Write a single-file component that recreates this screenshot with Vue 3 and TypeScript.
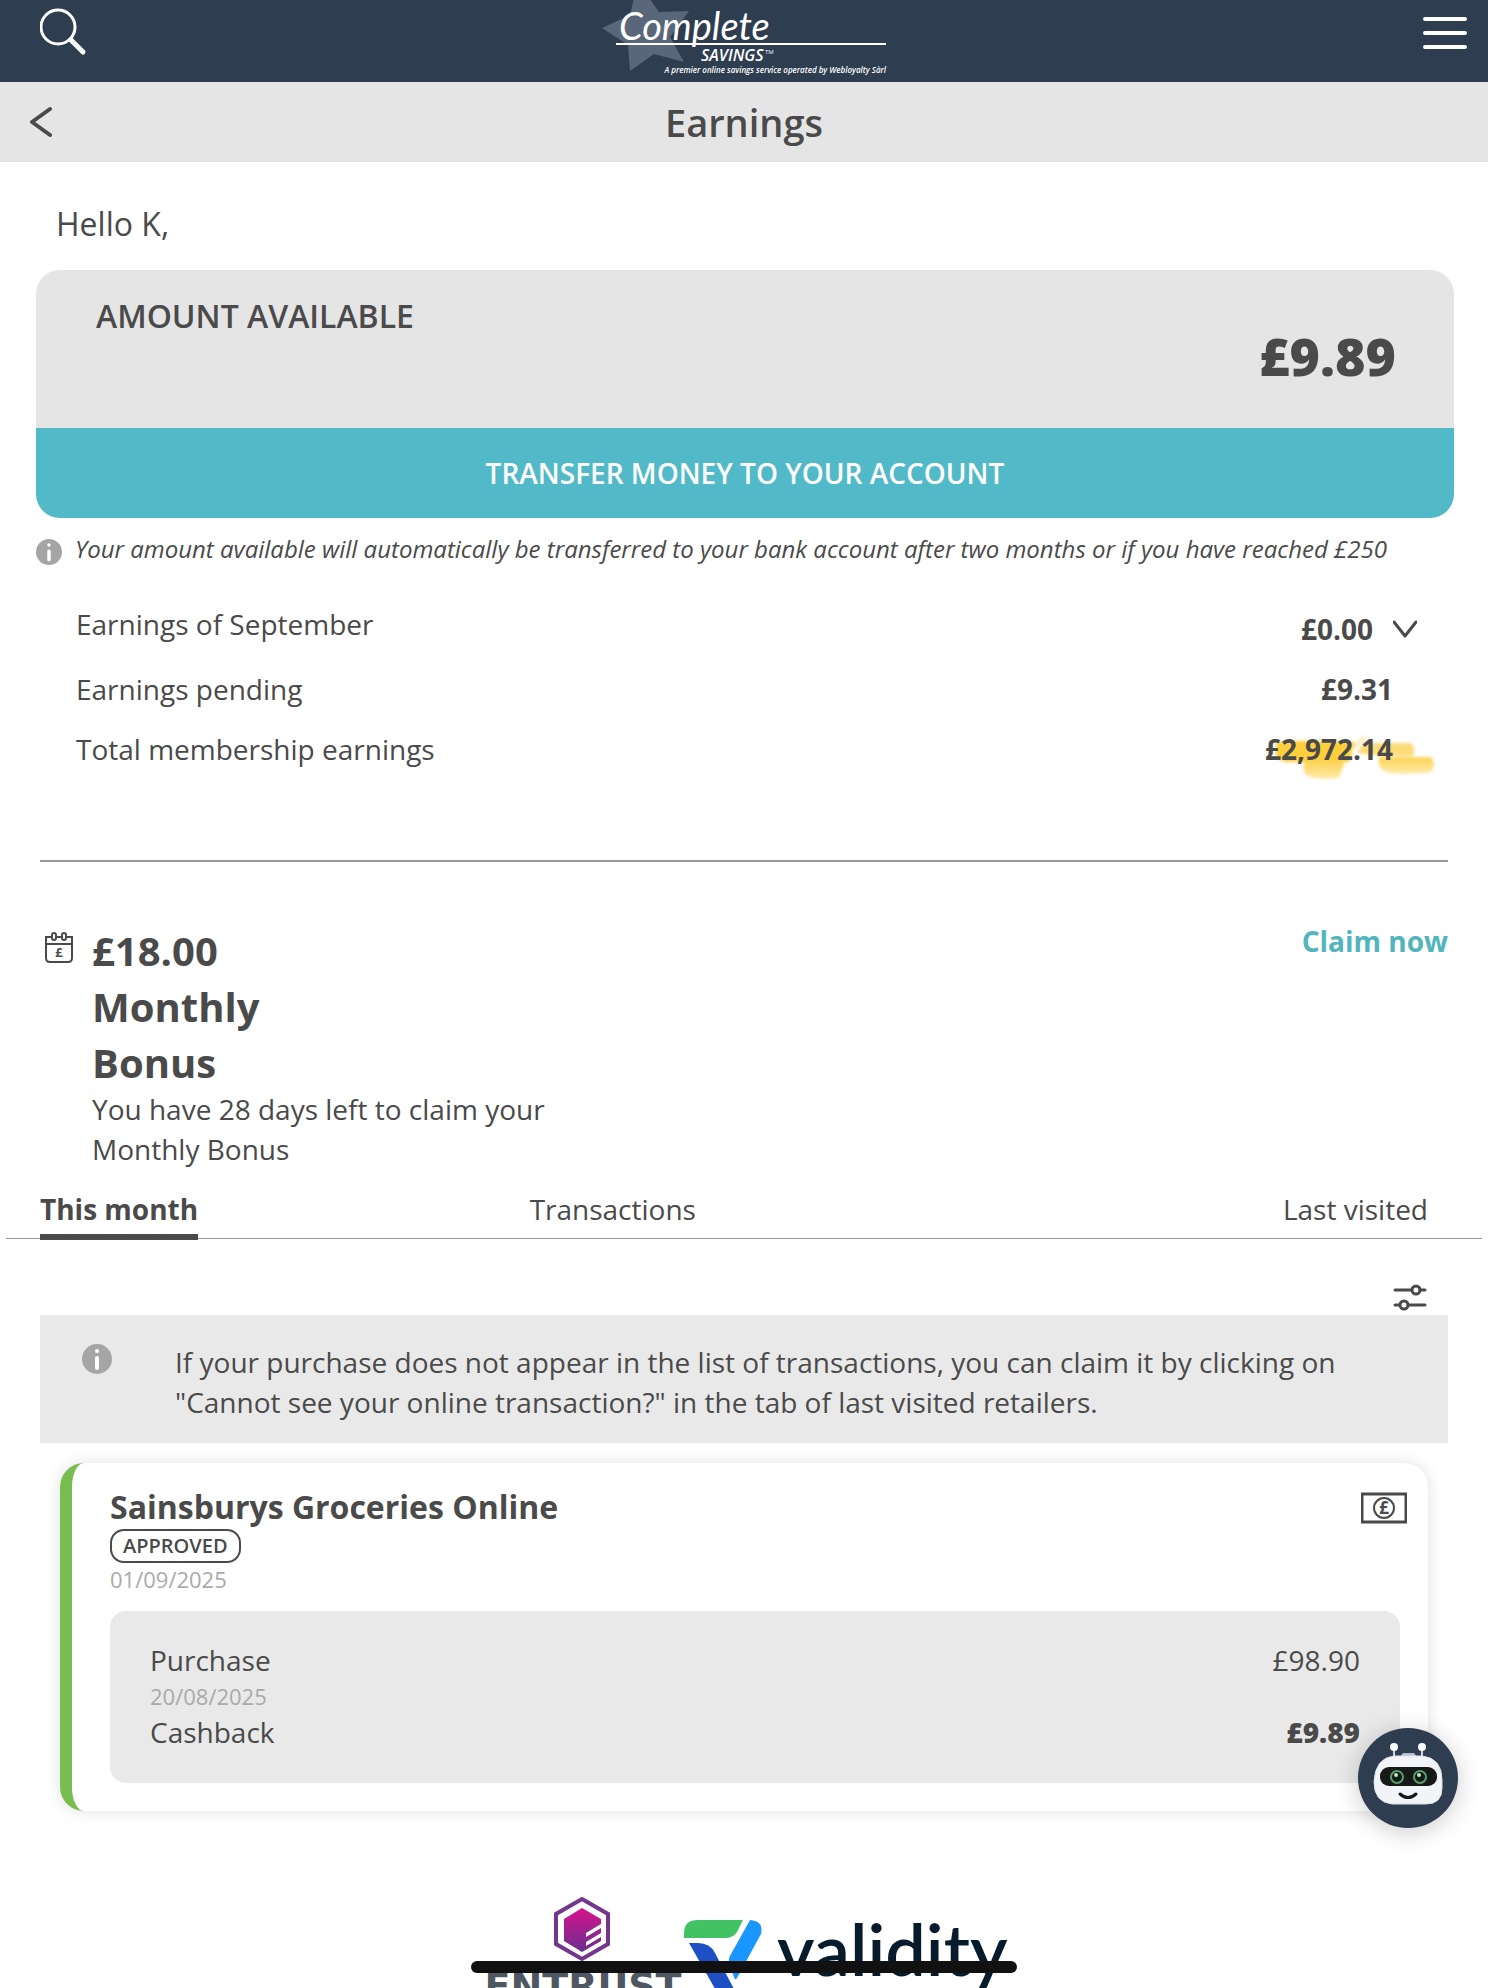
<script setup lang="ts">
interface Earning {
  label: string
  value: string
  expandable?: boolean
  marked?: boolean
}

const earnings: Earning[] = [
  { label: 'Earnings of September', value: '£0.00', expandable: true },
  { label: 'Earnings pending', value: '£9.31' },
  { label: 'Total membership earnings', value: '£2,972.14', marked: true },
]

const tabs: string[] = ['This month', 'Transactions', 'Last visited']
</script>

<template>
  <div class="page">
    <header class="topbar">
      <button class="icon-btn" aria-label="Search">
        <svg width="48" height="48" viewBox="0 0 48 48" fill="none" stroke="#fff" stroke-linecap="round">
          <circle cx="18" cy="19" r="17" stroke-width="3" />
          <path d="M31 32L43 44" stroke-width="5" />
        </svg>
      </button>
      <svg class="logo" width="288" height="82" viewBox="0 0 288 82" role="img" aria-label="Complete Savings">
        <path fill="#5a6679" d="M2 28L30 15L38 -18L59 12L89 11L70 37L84 62L54 54L30 71L28 45Z" />
        <text class="logo-script" x="19" y="40">Complete</text>
        <path d="M16 44H286" stroke="#fff" stroke-width="2" />
        <text class="logo-sub" x="101" y="61">SAVINGS</text>
        <text class="logo-tm" x="165" y="54">TM</text>
        <text class="logo-tag" x="286" y="73" text-anchor="end">A premier online savings service operated by Webloyalty Sàrl</text>
      </svg>
      <button class="icon-btn" aria-label="Menu">
        <svg width="44" height="34" viewBox="0 0 44 34" stroke="#fff" stroke-width="4" stroke-linecap="round">
          <path d="M2 3H42M2 17H42M2 31H42" />
        </svg>
      </button>
    </header>

    <div class="titlebar">
      <button class="icon-btn back" aria-label="Back">
        <svg width="24" height="32" viewBox="0 0 24 32" fill="none" stroke="#4a4a4a" stroke-width="4" stroke-linecap="round" stroke-linejoin="round">
          <path d="M20 3L2 16L20 29" />
        </svg>
      </button>
      <h1>Earnings</h1>
    </div>

    <main>
      <p class="hello">Hello K,</p>

      <section class="available">
        <div class="available-panel">
          <h2>AMOUNT AVAILABLE</h2>
          <strong>£9.89</strong>
        </div>
        <button class="transfer">TRANSFER MONEY TO YOUR ACCOUNT</button>
      </section>

      <p class="note">
        <svg width="26" height="26" viewBox="0 0 30 30">
          <circle cx="15" cy="15" r="15" fill="#a5a5a5" />
          <circle cx="15" cy="7" r="2" fill="#fff" />
          <path d="M15 14V24" stroke="#fff" stroke-width="4" stroke-linecap="round" />
        </svg>
        <em>Your amount available will automatically be transferred to your bank account after two months or if you have reached £250</em>
      </p>

      <dl class="earnings">
        <div v-for="row in earnings" :key="row.label" class="row" :class="{ expandable: row.expandable }">
          <dt>{{ row.label }}</dt>
          <dd>
            <svg v-if="row.marked" class="marker" width="176" height="52" viewBox="0 0 176 52">
              <defs>
                <linearGradient id="fade" x1="0" y1="0" x2="0" y2="1">
                  <stop offset="0" stop-color="#fdd353" />
                  <stop offset="1" stop-color="#fee9a8" />
                </linearGradient>
                <filter id="soft" x="-10%" y="-20%" width="120%" height="140%"><feGaussianBlur stdDeviation="1.5" /></filter>
              </defs>
              <g filter="url(#soft)">
                <path fill="#fdcf3e" d="M6 8Q12 6 84 8L78 28H16Q5 27 4 17Z" />
                <path fill="url(#fade)" d="M34 27H74L68 44Q48 46 36 42Q30 36 34 27Z" />
                <path fill="#fddc7a" d="M92 9H140Q145 14 142 22H110L86 19Z" />
                <path fill="url(#fade)" d="M108 23H160Q166 30 160 38Q138 41 118 39Q106 36 108 23Z" />
                <path d="M82 14L94 2" stroke="#fdeab0" stroke-width="3" />
              </g>
            </svg>
            <span>{{ row.value }}</span>
            <button v-if="row.expandable" class="icon-btn" aria-label="Show details">
              <svg width="24" height="18" viewBox="0 0 24 18" fill="none" stroke="#4a4a4a" stroke-width="3" stroke-linecap="round" stroke-linejoin="round">
                <path d="M1 2L12 16L23 2" />
              </svg>
            </button>
          </dd>
        </div>
      </dl>

      <hr class="divider" />

      <section class="bonus">
        <svg width="28" height="32" viewBox="0 0 28 32" fill="none" stroke="#4a4a4a" stroke-width="2">
          <path d="M1 5H27V26Q27 30 23 30H5Q1 30 1 26Z" />
          <path d="M1 12H27" />
          <rect x="7" y="1" width="4" height="7" rx="2" fill="#fff" />
          <rect x="17" y="1" width="4" height="7" rx="2" fill="#fff" />
          <text class="coin" x="14" y="25" font-size="13" text-anchor="middle">£</text>
        </svg>
        <div class="bonus-body">
          <h2>£18.00 Monthly Bonus</h2>
          <p>You have 28 days left to claim your Monthly Bonus</p>
        </div>
        <a href="#claim">Claim now</a>
      </section>

      <nav class="tabs">
        <button v-for="(tab, i) in tabs" :key="tab" :class="{ active: i === 0 }">{{ tab }}</button>
      </nav>

      <div class="filter">
        <button class="icon-btn" aria-label="Filter">
          <svg width="34" height="28" viewBox="0 0 34 28" fill="none" stroke="#4a4a4a" stroke-width="3" stroke-linecap="round">
            <path d="M2 7H18M27 7H32M2 22H6M15 22H32" />
            <circle cx="23" cy="7" r="4" />
            <circle cx="11" cy="22" r="4" />
          </svg>
        </button>
      </div>

      <aside class="info">
        <svg width="30" height="30" viewBox="0 0 30 30">
          <circle cx="15" cy="15" r="15" fill="#a5a5a5" />
          <circle cx="15" cy="7" r="2" fill="#fff" />
          <path d="M15 14V24" stroke="#fff" stroke-width="4" stroke-linecap="round" />
        </svg>
        <p>If your purchase does not appear in the list of transactions, you can claim it by clicking on "Cannot see your online transaction?" in the tab of last visited retailers.</p>
      </aside>

      <article class="card">
        <div class="card-head">
          <h3>Sainsburys Groceries Online</h3>
          <svg width="46" height="32" viewBox="0 0 46 32" fill="none" stroke="#4a4a4a">
            <rect x="1" y="2" width="44" height="28" stroke-width="3" />
            <circle cx="23" cy="16" r="10" stroke-width="2" />
            <text class="coin" x="23" y="22" font-size="17" text-anchor="middle">£</text>
          </svg>
        </div>
        <span class="badge">APPROVED</span>
        <p class="date">01/09/2025</p>
        <dl class="detail">
          <div><dt>Purchase</dt><dd>£98.90</dd></div>
          <div class="date">20/08/2025</div>
          <div><dt>Cashback</dt><dd class="total">£9.89</dd></div>
        </dl>
      </article>
    </main>

    <footer>
      <svg width="200" height="110" viewBox="0 0 200 110" role="img" aria-label="Entrust">
        <defs>
          <linearGradient id="gem" x1="0" y1="0" x2="0" y2="1">
            <stop offset="0" stop-color="#d6128a" />
            <stop offset="1" stop-color="#6a2f90" />
          </linearGradient>
        </defs>
        <path d="M98 2L124 17V47L98 62L72 47V17Z" fill="#fff" stroke="#74358c" stroke-width="4" />
        <path d="M98 11L117 22V27L102 36V40L117 31V36L102 45V49L117 40V44L98 55L80 44V22Z" fill="url(#gem)" />
        <text class="entrust" x="99" y="102" text-anchor="middle">ENTRUST</text>
      </svg>
      <svg class="validity-logo" width="320" height="110" viewBox="0 0 320 110" role="img" aria-label="Validity">
        <path fill="#43c263" d="M14 23H59L53 35Q49 41 41 41H0V36Q0 23 14 23Z" />
        <path fill="#1a96ff" d="M66 23Q80 24 77 37L53 81Q51 84 50 80L45 67Q44 62 47 57Z" />
        <path fill="#1f4fc4" d="M5 46H14Q26 46 31 56L50 92L46 104H38Z" />
        <text class="validity" x="93" y="79">validity</text>
      </svg>
    </footer>

    <button class="bot" aria-label="Open chat assistant">
      <svg width="100" height="100" viewBox="0 0 100 100">
        <path d="M36 18V32M64 18V32" stroke="#cdd3df" stroke-width="2" />
        <circle cx="36" cy="19" r="4" fill="#fff" />
        <circle cx="64" cy="19" r="4" fill="#fff" />
        <path d="M42 29L45 25H56L59 29Z" fill="#b7c0d2" />
        <path d="M36 28H64Q84 30 84 52V60Q84 76 68 76H34Q16 74 16 54Q17 30 36 28Z" fill="#f3f4f8" stroke="#dfe3ec" />
        <rect x="22" y="39" width="57" height="19" rx="9" fill="#161918" />
        <circle cx="39" cy="49" r="6" fill="#0c1d14" stroke="#5b9c6c" stroke-width="2" />
        <circle cx="62" cy="49" r="6" fill="#0c1d14" stroke="#5b9c6c" stroke-width="2" />
        <circle cx="38" cy="47" r="2" fill="#c4e5cc" />
        <circle cx="61" cy="47" r="2" fill="#c4e5cc" />
        <path d="M42 66Q50 73 58 66" fill="none" stroke="#16181c" stroke-width="3" stroke-linecap="round" />
      </svg>
    </button>
    <div class="home-bar"></div>
  </div>
</template>

<style>
body {
  margin: 0;
  background: #fff;
}
</style>

<style scoped>
.page {
  position: relative;
  display: flex;
  flex-direction: column;
  height: 100vh;
  overflow: hidden;
  font-family: 'Open Sans', 'Noto Sans', sans-serif;
  font-size: 28px;
  line-height: 40px;
  color: #4a4a4a;
  background: #fff;
}
h1, h2, h3, p, dl, dd {
  margin: 0;
}
svg {
  display: block;
  flex: none;
}
button {
  padding: 0;
  border: 0;
  background: none;
  font: inherit;
  color: inherit;
  cursor: pointer;
}
.topbar {
  display: flex;
  flex: none;
  align-items: flex-start;
  justify-content: space-between;
  height: 82px;
  padding: 0 21px 0 40px;
  background: #2e3d50;
}
.topbar .icon-btn {
  margin-top: 8px;
}
.topbar .icon-btn:last-child {
  margin-top: 16px;
}
.logo {
  margin-left: -24px;
}
.logo text {
  fill: #fff;
  font-style: italic;
}
.logo-script {
  font-family: Lato, sans-serif;
  font-size: 38px;
}
.logo-sub {
  font-size: 16px;
  font-weight: 600;
}
.logo .logo-tm {
  font-size: 6px;
  font-style: normal;
}
.logo-tag {
  font-size: 8px;
  font-weight: 600;
}
.titlebar {
  display: grid;
  flex: none;
  grid-template-columns: 1fr auto 1fr;
  align-items: center;
  height: 80px;
  padding: 0 30px;
  background: #e5e5e5;
}
h1 {
  font-size: 38px;
  font-weight: 600;
}
.back {
  justify-self: start;
}
main {
  flex: none;
  padding: 40px 40px 0;
}
.hello {
  padding-left: 16px;
  font-size: 32px;
  line-height: 44px;
}
.available {
  margin: 24px -6px 0 -4px;
  overflow: hidden;
  border-radius: 24px;
}
.available-panel {
  display: flex;
  justify-content: space-between;
  height: 124px;
  padding: 24px 58px 10px 60px;
  background: #e5e5e5;
}
.available h2 {
  font-size: 32px;
  font-weight: 600;
  line-height: 44px;
}
.available strong {
  align-self: center;
  font-size: 52px;
  font-weight: 800;
  line-height: 72px;
}
.transfer {
  display: block;
  width: 100%;
  height: 90px;
  background: #52b9c8;
  color: #fff;
  font-weight: 600;
}
.note {
  display: flex;
  align-items: flex-end;
  gap: 13px;
  margin: 13px 0 0 -4px;
  font-size: 24px;
  line-height: 36px;
  white-space: nowrap;
}
.note svg {
  margin-bottom: 2px;
}
.earnings {
  margin-top: 32px;
  padding: 0 55px 0 36px;
}
.row {
  display: flex;
  align-items: center;
  justify-content: space-between;
  height: 60px;
}
.expandable {
  margin-right: -24px;
}
.expandable dt {
  padding-bottom: 10px;
}
.row dd {
  position: relative;
  display: flex;
  align-items: center;
  gap: 20px;
  font-weight: 700;
}
.row dd span {
  position: relative;
}
.marker {
  position: absolute;
  top: 5px;
  left: 6px;
}
.divider {
  height: 2px;
  margin: 81px 0 61px;
  border: 0;
  background: #999;
}
.bonus {
  display: flex;
  align-items: flex-start;
}
.bonus > svg {
  margin: 9px 19px 0 5px;
}
.bonus-body {
  flex: 1;
}
.bonus h2 {
  max-width: 200px;
  font-size: 40px;
  font-weight: 700;
  line-height: 56px;
}
.bonus p {
  max-width: 480px;
  margin-top: -2px;
}
.bonus a {
  margin-top: -2px;
  color: #52b5be;
  font-weight: 700;
  text-decoration: none;
}
.coin {
  fill: #4a4a4a;
  stroke: none;
  font-weight: 700;
}
.tabs {
  display: grid;
  grid-template-columns: 13fr 20fr auto;
  justify-items: start;
  margin: 20px -34px 0;
  padding: 0 54px 0 34px;
  border-bottom: 1px solid #999;
}
.tabs button {
  margin-bottom: -2px;
  padding-bottom: 5px;
  border-bottom: 6px solid transparent;
}
.tabs .active {
  border-color: #4a4a4a;
  font-weight: 700;
}
.filter {
  display: flex;
  justify-content: flex-end;
  padding: 44px 21px 4px;
}
.info {
  display: flex;
  gap: 63px;
  padding: 27px 42px 21px;
  background: #e9e9e9;
}
.info svg {
  margin-top: 2px;
}
.card {
  margin: 20px 20px 0;
  padding: 22px 21px 28px 38px;
  border-left: 12px solid #77bd4f;
  border-radius: 24px;
  box-shadow: 0 0 16px rgba(0, 0, 0, 0.12);
}
.card-head {
  display: flex;
  align-items: center;
  justify-content: space-between;
}
.card-head svg {
  margin-top: 2px;
}
h3 {
  font-size: 32px;
  line-height: 44px;
}
.badge {
  display: block;
  width: fit-content;
  padding: 0 11px;
  border: 2px solid #4a4a4a;
  border-radius: 14px;
  font-size: 20px;
  font-weight: 600;
  line-height: 30px;
}
.date {
  color: #aaa;
  font-size: 22px;
  line-height: 32px;
}
.detail {
  margin: 16px 7px 0 0;
  padding: 29px 40px 31px;
  border-radius: 16px;
  background: #e9e9e9;
}
.detail div {
  display: flex;
  justify-content: space-between;
}
.total {
  font-weight: 800;
}
footer {
  display: flex;
  flex: 1;
  align-items: flex-start;
  justify-content: center;
  min-height: 0;
  padding-top: 86px;
  overflow: hidden;
}
.entrust {
  fill: #4f5862;
  font-family: 'DejaVu Sans', sans-serif;
  font-size: 38px;
  font-weight: 700;
}
.validity-logo {
  overflow: visible;
}
.validity {
  fill: #061b2b;
  font-family: Lato, sans-serif;
  font-size: 72px;
  font-weight: 600;
}
.bot {
  position: absolute;
  right: 30px;
  bottom: 160px;
  border-radius: 50%;
  background: #2e3d50;
  box-shadow: 0 4px 24px rgba(0, 0, 0, 0.2);
}
.home-bar {
  position: absolute;
  bottom: 15px;
  left: 50%;
  width: 546px;
  height: 12px;
  margin-left: -273px;
  border-radius: 6px;
  background: #111;
}
</style>
